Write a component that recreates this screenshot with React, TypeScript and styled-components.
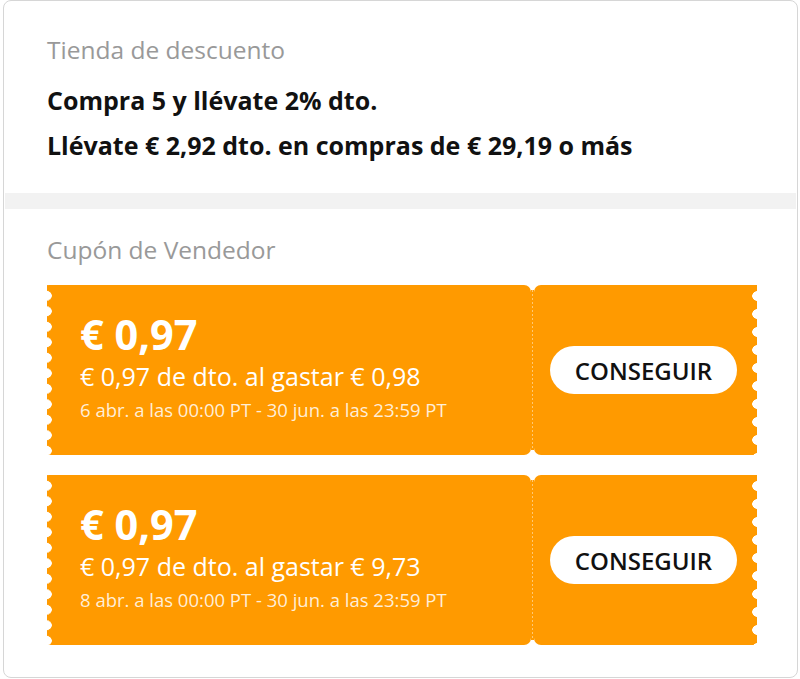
import React from "react"
import styled, { createGlobalStyle } from "styled-components"

const orange = "#ff9a00"

const GlobalStyle = createGlobalStyle`
  html, body {
    margin: 0;
    padding: 0;
    background: #fff;
  }
  body {
    font-family: "Open Sans", "Liberation Sans", sans-serif;
  }
`

const Card = styled.div`
  box-sizing: border-box;
  width: 795px;
  height: 678px;
  margin-left: 3px;
  border: 1px solid #d6d6d6;
  border-radius: 8px;
  overflow: hidden;
`
const Section = styled.section<{ $top: number }>`
  padding: ${p => p.$top}px 0 0 43px;
`
const Heading = styled.h2`
  margin: 0;
  font-size: 24.5px;
  font-weight: 400;
  color: #999;
  line-height: 32px;
`
const Rule = styled.p<{ $top: number }>`
  margin: ${p => p.$top}px 0 0;
  font-size: 25px;
  font-weight: 700;
  color: #111;
  line-height: 34px;
`
const Band = styled.div`
  height: 16px;
  margin: 31px 1px 0;
  background: #f2f2f2;
`
const CouponList = styled.div`
  display: flex;
  flex-direction: column;
  gap: 20px;
  margin-top: 19px;
`
const Coupon = styled.div`
  display: flex;
  width: 710px;
  height: 170px;
`
const Main = styled.div`
  flex: 1;
  display: flex;
  flex-direction: column;
  padding: 24px 0 0 33px;
  color: #fff;
  border-radius: 0 7px 7px 0;
  background-color: ${orange};
  background-image: radial-gradient(circle at 0 50%, #fff 4.5px, transparent 5px);
  background-size: 10px 15.5px;
  background-repeat: repeat-y;
  background-position: 0 3px;
`
const Divider = styled.div`
  width: 3px;
  margin: 5px 0;
  background-color: ${orange};
  background-image: linear-gradient(to bottom, rgba(255, 255, 255, 0.45) 50%, transparent 50%);
  background-size: 1px 4px;
  background-repeat: repeat-y;
  background-position: 1px 0;
`
const Side = styled.div`
  width: 223px;
  display: flex;
  align-items: center;
  justify-content: center;
  padding-right: 4px;
  box-sizing: border-box;
  border-radius: 7px 0 0 7px;
  background-color: ${orange};
  background-image: radial-gradient(circle at 100% 50%, #fff 4.5px, transparent 5px);
  background-size: 10px 18px;
  background-repeat: repeat-y;
  background-position: 100% 2px;
`
const Amount = styled.div`
  font-size: 41.5px;
  font-weight: 700;
  line-height: 50px;
`
const Condition = styled.div`
  font-size: 25px;
  line-height: 32px;
  margin-top: 1px;
`
const Period = styled.div`
  font-size: 18.5px;
  line-height: 24px;
  margin-top: 6px;
  color: rgba(255, 255, 255, 0.85);
`
const GetButton = styled.button`
  width: 187px;
  height: 48px;
  border: none;
  border-radius: 24px;
  background: #fff;
  color: #111;
  font-family: inherit;
  font-size: 24px;
  font-weight: 600;
  cursor: pointer;
`

const coupons = [
  { amount: "€ 0,97", condition: "€ 0,97 de dto. al gastar € 0,98", period: "6 abr. a las 00:00 PT - 30 jun. a las 23:59 PT" },
  { amount: "€ 0,97", condition: "€ 0,97 de dto. al gastar € 9,73", period: "8 abr. a las 00:00 PT - 30 jun. a las 23:59 PT" },
]

const App: React.FC = () => {
  return (
    <>
      <GlobalStyle />
      <Card>
        <Section $top={33}>
          <Heading>Tienda de descuento</Heading>
          <Rule $top={17}>Compra 5 y llévate 2% dto.</Rule>
          <Rule $top={11}>Llévate € 2,92 dto. en compras de € 29,19 o más</Rule>
        </Section>
        <Band />
        <Section $top={25}>
          <Heading>Cupón de Vendedor</Heading>
          <CouponList>
            {coupons.map((c, i) => (
              <Coupon key={i}>
                <Main>
                  <Amount>{c.amount}</Amount>
                  <Condition>{c.condition}</Condition>
                  <Period>{c.period}</Period>
                </Main>
                <Divider />
                <Side>
                  <GetButton>CONSEGUIR</GetButton>
                </Side>
              </Coupon>
            ))}
          </CouponList>
        </Section>
      </Card>
    </>
  )
}

export default App
